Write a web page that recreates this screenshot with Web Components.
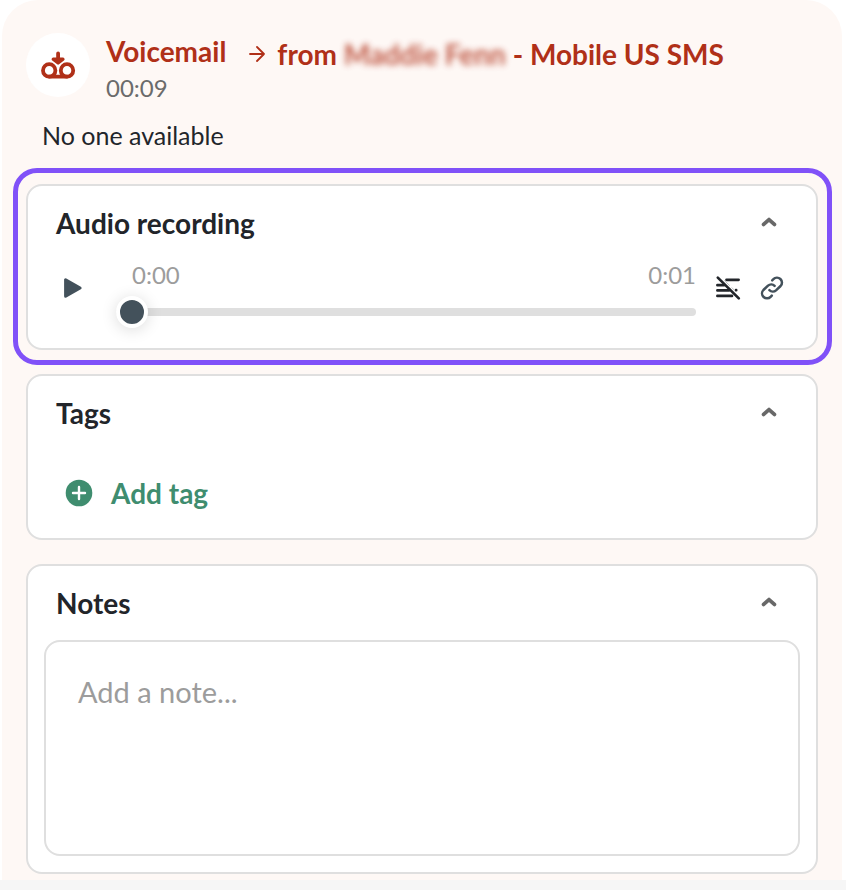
<!DOCTYPE html>
<html lang="en">
<head>
<meta charset="utf-8">
<meta name="viewport" content="width=device-width, initial-scale=1">
<title>Voicemail</title>
<style>
  body {
    margin: 0;
    background: #fff;
    color: #22252a;
    font-family: Lato, "Liberation Sans", sans-serif;
    --accent: #b03018;
    --border: #dfdfdf;
    --slate: #43515b;
    --green: #3f8d6f;
    --highlight: #8051f8;
    --muted: #9c9c9c;
  }
</style>
</head>
<body>
<voicemail-panel>
  <call-header slot="header" length="00:09">
    Voicemail
    <span slot="source">from <redacted-name>Maddie Fenn</redacted-name> - Mobile US SMS</span>
  </call-header>
  <span slot="status">No one available</span>
  <panel-card highlighted heading="Audio recording"><audio-player elapsed="0:00" total="0:01"></audio-player></panel-card>
  <panel-card heading="Tags"><tag-adder>Add tag</tag-adder></panel-card>
  <panel-card heading="Notes"><note-field placeholder="Add a note..."></note-field></panel-card>
</voicemail-panel>

<script>
class BaseElement extends HTMLElement {
  connectedCallback() {
    if (this.shadowRoot) return;
    const template = document.createElement('template');
    template.innerHTML = '<style>*{box-sizing:border-box}button{border:0;padding:0;background:none;font:inherit;color:inherit;cursor:pointer}svg{display:block;flex:none}</style>' + this.render();
    this.attachShadow({ mode: 'open' }).append(template.content.cloneNode(true));
    this.ready();
  }
  ready() {}
}

customElements.define('voicemail-panel', class extends BaseElement {
  render() {
    return `
    <style>
      :host { display: block; }
      main { margin: 0 4px 0 2px; padding: 33px 24px 6px; background: #fef8f5; border-radius: 36px 36px 0 0; }
      .status { margin: 18px 0 34px; padding-left: 16px; font-size: 25px; line-height: 30px; }
      .cards { display: flex; flex-direction: column; gap: 24px; }
      footer { height: 10px; background: #f6f6f6; }
    </style>
    <main>
      <slot name="header"></slot>
      <p class="status"><slot name="status"></slot></p>
      <div class="cards"><slot></slot></div>
    </main>
    <footer></footer>`;
  }
});

customElements.define('redacted-name', class extends BaseElement {
  render() {
    return `<style>:host { display: inline-block; filter: blur(3px); opacity: .8; }</style><slot></slot>`;
  }
});

customElements.define('call-header', class extends BaseElement {
  render() {
    return `
    <style>
      :host { display: flex; align-items: flex-start; color: var(--accent); font-size: 28px; line-height: 34px; }
      .avatar { width: 64px; height: 64px; flex: none; border-radius: 50%; background: #fff; margin-right: 16px; }
      .title { padding-top: 1px; }
      h1 { margin: 0; font-size: 28px; line-height: 34px; font-weight: 700; }
      time { display: block; margin-top: 6px; font-size: 24px; line-height: 28px; color: #6b6b6b; }
      .arrow { margin: 13px 12px 0 23px; }
      .source { padding-top: 4px; font-weight: 700; white-space: nowrap; }
    </style>
    <div class="avatar">
      <svg width="64" height="64" viewBox="0 0 64 64" fill="none" stroke="#b03018" stroke-width="3.8" stroke-linecap="round" stroke-linejoin="round" aria-hidden="true">
        <circle cx="23.2" cy="37.4" r="6.2"/><circle cx="41" cy="37.4" r="6.2"/>
        <path d="M23.2 43.6H41M32.1 20.5V28" />
        <path d="M27.2 26.2L32.1 30L37 26.2Z" fill="#b03018" stroke-width="3.2"/>
      </svg>
    </div>
    <div class="title"><h1><slot></slot></h1><time>${this.getAttribute('length')}</time></div>
    <svg class="arrow" width="16" height="16" viewBox="0 0 16 16" fill="none" stroke="#b03018" stroke-width="1.8" stroke-linecap="round" stroke-linejoin="round" aria-hidden="true"><path d="M1 8H15M8 1L15 8L8 15"/></svg>
    <div class="source"><slot name="source"></slot></div>`;
  }
});

customElements.define('panel-card', class extends BaseElement {
  render() {
    const heading = this.getAttribute('heading');
    return `
    <style>
      :host { display: block; position: relative; box-sizing: border-box; background: #fff; border: 2px solid var(--border); border-radius: 16px; }
      :host([highlighted])::after { content: ""; position: absolute; inset: -18px -16px -17px -15px; border: 5px solid var(--highlight); border-radius: 24px; pointer-events: none; }
      header { display: flex; align-items: flex-start; justify-content: space-between; padding: 20px 31px 0 28px; }
      h2 { margin: 0; font-size: 28px; line-height: 34px; font-weight: 700; }
      button { width: 32px; height: 32px; display: grid; place-items: center; }
      button[aria-expanded="false"] svg { transform: rotate(180deg); }
    </style>
    <header>
      <h2>${heading}</h2>
      <button type="button" aria-expanded="true" aria-controls="body" aria-label="Toggle ${heading}">
        <svg width="16" height="10" viewBox="0 0 16 10" fill="none" stroke="#686868" stroke-width="3.8" stroke-linecap="round" stroke-linejoin="round"><path d="M2.6 7.4L8 2.6L13.4 7.4"/></svg>
      </button>
    </header>
    <div id="body"><slot></slot></div>`;
  }
  ready() {
    const button = this.shadowRoot.querySelector('button');
    const body = this.shadowRoot.getElementById('body');
    button.addEventListener('click', () => {
      body.hidden = !body.hidden;
      button.setAttribute('aria-expanded', String(!body.hidden));
    });
  }
});

customElements.define('audio-player', class extends BaseElement {
  render() {
    return `
    <style>
      :host { display: flex; align-items: flex-start; padding: 20px 22px 20px 16px; color: var(--slate); }
      button { height: 56px; display: grid; place-items: center; flex: none; }
      .play { width: 58px; margin-right: 14px; }
      .tool { width: 44px; }
      .timeline { flex: 1; min-width: 0; margin-right: 10px; }
      .times { display: flex; justify-content: space-between; padding: 1px 0 7px 16px; font-size: 24px; line-height: 28px; color: var(--muted); }
      input { display: block; width: 100%; height: 32px; margin: 0; appearance: none; background: none; cursor: pointer; }
      input::-webkit-slider-runnable-track { height: 8px; border-radius: 4px; background: var(--border); }
      input::-webkit-slider-thumb { appearance: none; width: 32px; height: 32px; margin-top: -12px; border: 4px solid #fff; border-radius: 50%; background: var(--slate); box-shadow: 0 2px 16px rgba(0,0,0,.14); }
    </style>
    <button class="play" type="button" aria-label="Play">
      <svg width="20" height="22" viewBox="0 0 20 22" fill="#43515b" stroke="#43515b" stroke-width="3" stroke-linejoin="round"><path d="M2.6 2.7V19.3L17.1 11Z"/></svg>
    </button>
    <div class="timeline">
      <div class="times"><span>${this.getAttribute('elapsed')}</span><span>${this.getAttribute('total')}</span></div>
      <input type="range" min="0" max="1" step="0.01" value="0" aria-label="Playback position">
    </div>
    <button class="tool" type="button" aria-label="Transcript unavailable">
      <svg width="26" height="26" viewBox="0 0 26 26" fill="none" stroke="#22252a" stroke-width="2.7" stroke-linecap="round">
        <path d="M11.5 4.8H23.6M2.4 10.2H9M2.4 15.4H14M2.4 20.9H17M21 15.2H21.2"/>
        <path d="M2.8 2.6L23.8 23.4"/>
        <path d="M9.5 5.6L14.5 10.4M17 12.8L19 14.8" stroke="#bfc1c3" stroke-width="1"/>
      </svg>
    </button>
    <button class="tool" type="button" aria-label="Copy link">
      <svg width="24" height="24" viewBox="0 0 24 24" fill="none" stroke="#43515b" stroke-width="2.5" stroke-linecap="round" stroke-linejoin="round">
        <path d="M11.8 19.6L10.6 20.8A4.8 4.8 0 0 1 3.4 14L8 9.6A4.8 4.8 0 0 1 14.6 9.8"/>
        <path d="M12.2 4.4L13.4 3.2A4.8 4.8 0 0 1 20.6 10L16 14.4A4.8 4.8 0 0 1 9.4 14.2"/>
      </svg>
    </button>`;
  }
});

customElements.define('tag-adder', class extends BaseElement {
  render() {
    return `
    <style>
      :host { display: block; padding: 46px 28px 28px 37px; }
      button { display: flex; align-items: center; gap: 18px; font-size: 28px; line-height: 34px; font-weight: 700; color: var(--green); }
    </style>
    <button type="button">
      <svg width="28" height="28" viewBox="0 0 28 28" aria-hidden="true"><circle cx="14" cy="14" r="13.3" fill="#3f8d6f"/><path d="M14 8V20M8 14H20" stroke="#fff" stroke-width="2.4" stroke-linecap="round"/></svg>
      <span><slot></slot></span>
    </button>`;
  }
});

customElements.define('note-field', class extends BaseElement {
  render() {
    return `
    <style>
      :host { display: block; padding: 20px 16px 16px; }
      textarea { display: block; width: 100%; height: 216px; padding: 32px; border: 2px solid var(--border); border-radius: 16px; background: #fff; font: 29px/36px Lato, "Liberation Sans", sans-serif; color: inherit; resize: none; }
      textarea::placeholder { color: var(--muted); opacity: 1; }
    </style>
    <textarea aria-label="Note" placeholder="${this.getAttribute('placeholder')}"></textarea>`;
  }
});
</script>
</body>
</html>
